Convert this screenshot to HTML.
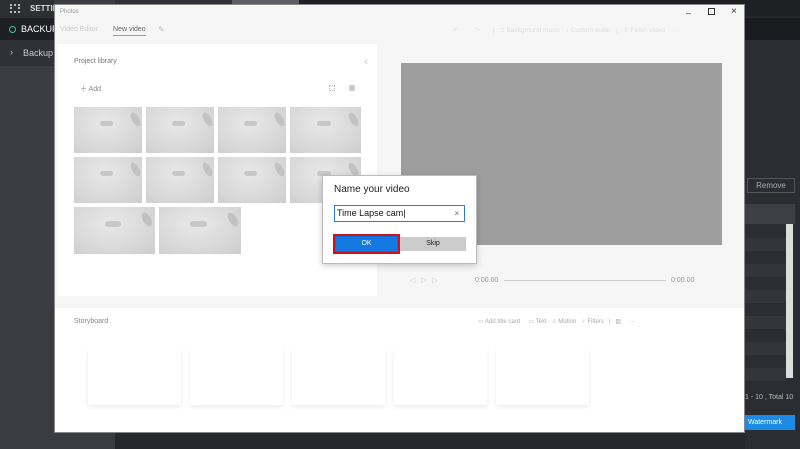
<!DOCTYPE html>
<html><head><meta charset="utf-8"><style>
*{margin:0;padding:0;box-sizing:border-box}
body{width:800px;height:449px;overflow:hidden;background:#25272c;font-family:"Liberation Sans",sans-serif;position:relative}
.a{position:absolute}
.th{position:absolute;background:radial-gradient(ellipse at 45% 35%,#e8e8e8 0,#dadada 55%,#cdcdcd 100%)}
.th:after{content:"";position:absolute;left:38%;top:30%;width:20%;height:12%;background:#c8c8c8;border-radius:3px}
.th:before{content:"";position:absolute;right:5%;top:10%;width:10%;height:32%;background:#c2c2c2;border-radius:50%;transform:rotate(-30deg)}
.t{color:#bbb;font-size:7px}
.card{position:absolute;top:349px;width:93px;height:56px;background:#fff;box-shadow:0 2px 4px rgba(0,0,0,.08)}
.r{position:absolute;left:745px;width:41px;height:13px;background:#33353a}
</style></head><body>
<div class="a" style="left:0;top:0;width:800px;height:16px;background:#1f2024"></div>
<div class="a" style="left:97px;top:0;width:135px;height:5px;background:#2e3035"></div>
<div class="a" style="left:232px;top:0;width:67px;height:5px;background:#5c5d62"></div>
<div class="a" style="left:0;top:0;width:115px;height:449px;background:#3a3c41"></div>
<div class="a" style="left:0;top:0;width:54px;height:18px;background:#2d2f33"></div>
<div class="a" style="left:10px;top:4px;width:10px;height:9px;border:2px dotted #bbb"></div>
<div class="a" style="left:30px;top:4px;color:#ddd;font-size:8px;font-weight:bold">SETTING</div>
<div class="a" style="left:0;top:18px;width:54px;height:22px;background:#1e1f23"></div>
<div class="a" style="left:9px;top:26px;width:7px;height:7px;border:1.5px solid #3c9;border-radius:50%"></div>
<div class="a" style="left:21px;top:24px;color:#fff;font-size:9px">BACKUP</div>
<div class="a" style="left:0;top:40px;width:54px;height:26px;background:#2f3136"></div>
<div class="a" style="left:10px;top:47px;color:#ccc;font-size:9px">›</div>
<div class="a" style="left:23px;top:48px;color:#ccc;font-size:9px">Backup</div>
<div class="a" style="left:745px;top:18px;width:55px;height:22px;background:#1a1b1e"></div>
<div class="a" style="left:745px;top:40px;width:55px;height:409px;background:#2b2d32"></div>
<div class="a" style="left:747px;top:178px;width:48px;height:15px;border:1px solid #555;color:#aaa;font-size:8px;text-align:center;line-height:13px">Remove</div>
<div class="a" style="left:745px;top:204px;width:50px;height:20px;background:#3d3f44"></div>
<div class="r" style="top:238px"></div><div class="r" style="top:264px"></div><div class="r" style="top:290px"></div><div class="r" style="top:316px"></div><div class="r" style="top:342px"></div><div class="r" style="top:368px"></div>
<div class="a" style="left:786px;top:224px;width:7px;height:154px;background:#ddd"></div>
<div class="a" style="left:745px;top:394px;color:#bbb;font-size:7px">1 - 10 , Total 10</div>
<div class="a" style="left:745px;top:415px;width:50px;height:15px;background:#1a8ce6;color:#fff;font-size:7px;line-height:15px;padding-left:3px">Watermark</div>
<div class="a" style="left:54px;top:4px;width:691px;height:429px;background:#f6f6f6;border:1px solid #888"></div>
<div class="a t" style="left:60px;top:9px;font-size:6px;color:#999">Photos</div>
<div class="a t" style="left:60px;top:26px;color:#ccc">Video Editor</div>
<div class="a" style="left:113px;top:26px;color:#666;font-size:7px;border-bottom:1px solid #7ab;padding-bottom:2px">New video</div>
<div class="a t" style="left:158px;top:25px;font-size:8px">✎</div>
<div class="a" style="left:686px;top:8px;font-size:9px;color:#333">–</div>
<div class="a" style="left:708px;top:8px;width:7px;height:7px;border:1px solid #333"></div>
<div class="a" style="left:731px;top:6px;font-size:10px;color:#333">×</div>
<div class="a t" style="left:453px;top:26px;color:#ddd;font-size:6.5px;white-space:nowrap">↶ &nbsp; &nbsp; &nbsp; &nbsp; ↷ &nbsp; &nbsp; &nbsp; | &nbsp; ♫ Background music &nbsp; ♪ Custom audio &nbsp; | &nbsp; ⇪ Finish video &nbsp; ···</div>
<div class="a" style="left:57px;top:44px;width:320px;height:252px;background:#fff"></div>
<div class="a" style="left:74px;top:58px;color:#777;font-size:7px">Project library</div>
<div class="a" style="left:364px;top:54px;color:#ccc;font-size:12px">‹</div>
<div class="a" style="left:80px;top:84px;color:#888;font-size:7px">＋ Add</div>
<div class="a" style="left:329px;top:85px;width:6px;height:6px;border:1px dotted #bbb"></div>
<div class="a" style="left:349px;top:85px;width:6px;height:6px;background:#ccc"></div>
<div class="th" style="left:74px;top:107px;width:68px;height:46px"></div>
<div class="th" style="left:146px;top:107px;width:68px;height:46px"></div>
<div class="th" style="left:218px;top:107px;width:68px;height:46px"></div>
<div class="th" style="left:290px;top:107px;width:71px;height:46px"></div>
<div class="th" style="left:74px;top:157px;width:68px;height:46px"></div>
<div class="th" style="left:146px;top:157px;width:68px;height:46px"></div>
<div class="th" style="left:218px;top:157px;width:68px;height:46px"></div>
<div class="th" style="left:290px;top:157px;width:71px;height:46px"></div>
<div class="th" style="left:74px;top:207px;width:81px;height:47px"></div>
<div class="th" style="left:159px;top:207px;width:82px;height:47px"></div>
<div class="a" style="left:401px;top:63px;width:321px;height:182px;background:#9e9e9e"></div>
<div class="a t" style="left:410px;top:276px;color:#ccc">◁ &nbsp; ▷ &nbsp; ▷</div>
<div class="a t" style="left:475px;top:277px;color:#999">0:00.00</div>
<div class="a" style="left:504px;top:280px;width:162px;height:1px;background:#ccc"></div>
<div class="a t" style="left:671px;top:277px;color:#999">0:00.00</div>
<div class="a" style="left:55px;top:308px;width:689px;height:124px;background:#fff"></div>
<div class="a" style="left:74px;top:318px;color:#888;font-size:7px">Storyboard</div>
<div class="a t" style="left:478px;top:318px;color:#aaa;font-size:6px;white-space:nowrap">▭ Add title card &nbsp; &nbsp; ▭ Text &nbsp; ⊹ Motion &nbsp; ♀ Filters &nbsp; | &nbsp; ▥ &nbsp; &nbsp; ···</div>
<div class="card" style="left:88px"></div>
<div class="card" style="left:190px"></div>
<div class="card" style="left:292px"></div>
<div class="card" style="left:394px"></div>
<div class="card" style="left:496px"></div>
<div class="a" style="left:322px;top:175px;width:155px;height:89px;background:#fff;border:1px solid #bbb;box-shadow:0 2px 6px rgba(0,0,0,.2)"></div>
<div class="a" style="left:334px;top:184px;font-size:10px;color:#222">Name your video</div>
<div class="a" style="left:334px;top:205px;width:131px;height:17px;border:1px solid #2a7bd6;font-size:9px;line-height:15px;padding-left:2px;color:#111">Time Lapse cam|<span style="position:absolute;right:5px;color:#666;font-size:8px">×</span></div>
<div class="a" style="left:333px;top:234px;width:67px;height:20px;border:2px solid #d0101c;background:#0b6fd8"></div>
<div class="a" style="left:336px;top:237px;width:61px;height:14px;background:#1479e0;color:#fff;font-size:7px;text-align:center;line-height:14px">OK</div>
<div class="a" style="left:400px;top:237px;width:66px;height:14px;background:#ccc;color:#222;font-size:7px;text-align:center;line-height:14px">Skip</div>
</body></html>
